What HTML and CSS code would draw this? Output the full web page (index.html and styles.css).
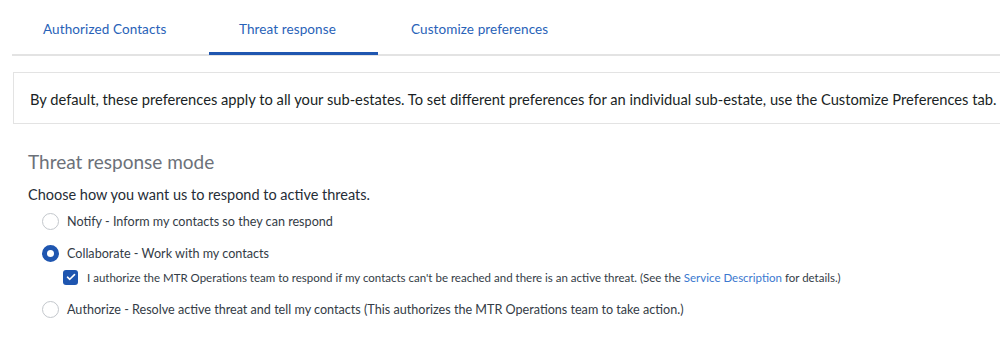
FILE: index.html
```html
<!DOCTYPE html>
<html>
<head>
<meta charset="utf-8">
<link rel="stylesheet" href="styles.css">
</head>
<body>
<div class="page">
  <nav class="tabs">
    <a class="tab tab-contacts">Authorized Contacts</a>
    <a class="tab tab-threat active">Threat response</a>
    <a class="tab tab-custom">Customize preferences</a>
  </nav>
  <div class="info">By default, these preferences apply to all your sub-estates. To set different preferences for an individual sub-estate, use the Customize Preferences tab.</div>
  <section class="mode">
    <h2 class="heading">Threat response mode</h2>
    <p class="lead">Choose how you want us to respond to active threats.</p>
    <div class="options">
      <label class="option"><span class="radio"></span><span>Notify - Inform my contacts so they can respond</span></label>
      <label class="option"><span class="radio checked"></span><span>Collaborate - Work with my contacts</span></label>
      <label class="sub"><span class="check"><svg width="10" height="8" viewBox="0 0 10 8"><path d="M1.5 4.2 L3.8 6.3 L8.5 1.6" fill="none" stroke="#fff" stroke-width="1.6" stroke-linecap="round" stroke-linejoin="round"/></svg></span><span>I authorize the MTR Operations team to respond if my contacts can't be reached and there is an active threat. (See the <a class="link">Service Description</a> for details.)</span></label>
      <label class="option"><span class="radio"></span><span>Authorize - Resolve active threat and tell my contacts (This authorizes the MTR Operations team to take action.)</span></label>
    </div>
  </section>
</div>
</body>
</html>
```
FILE: styles.css
```css
html, body {
  margin: 0;
  padding: 0;
  background: #fff;
}
body {
  font-family: Lato, "Open Sans", "Liberation Sans", sans-serif;
  color: #2b323b;
  width: 1000px;
  height: 348px;
  overflow: hidden;
}
.page {
  padding-left: 12px;
}
.tabs {
  display: flex;
  border-bottom: 2px solid #e3e3e3;
  height: 56px;
  box-sizing: border-box;
  padding-left: 1px;
}
.tab {
  color: #2862b8;
  font-size: 13.5px;
  padding: 21px 0 0 30px;
  box-sizing: border-box;
  height: 54px;
  text-decoration: none;
  letter-spacing: 0.1px;
}
.tab-contacts {
  width: 196px;
}
.tab-threat {
  width: 169px;
}
.tab-custom {
  padding-left: 33px;
}
.tab.active {
  border-bottom: 3px solid #1f56b0;
  height: 55px;
}
.info {
  margin-top: 16px;
  margin-left: 1px;
  border: 1px solid #e3e3e3;
  border-right: none;
  height: 52px;
  box-sizing: border-box;
  padding: 17px 0 0 16px;
  font-size: 14.7px;
  color: #1a1f25;
  white-space: nowrap;
}
.mode {
  padding-left: 16px;
}
.heading {
  margin: 26px 0 0;
  font-size: 19px;
  font-weight: 400;
  color: #6c7179;
}
.lead {
  margin: 13px 0 0;
  font-size: 14.5px;
  color: #262d36;
}
.options {
  display: flex;
  flex-direction: column;
  padding-left: 14px;
  margin-top: 2px;
}
.option {
  display: flex;
  align-items: center;
  gap: 8px;
  font-size: 12.6px;
  color: #343c46;
  height: 32px;
}
.radio {
  width: 17px;
  height: 17px;
  border-radius: 50%;
  border: 1px solid #c3c7cc;
  box-sizing: border-box;
  background: #fff;
  flex: none;
}
.radio.checked {
  border: 5px solid #1f56b0;
}
.sub {
  display: flex;
  align-items: center;
  gap: 9px;
  padding-left: 21px;
  font-size: 11.5px;
  color: #343c46;
  height: 24px;
  margin-top: -4px;
  margin-bottom: 4px;
}
.check {
  width: 15px;
  height: 15px;
  border-radius: 3px;
  background: #1f56b0;
  display: flex;
  align-items: center;
  justify-content: center;
  flex: none;
}
.link {
  color: #3a78cf;
}
```
